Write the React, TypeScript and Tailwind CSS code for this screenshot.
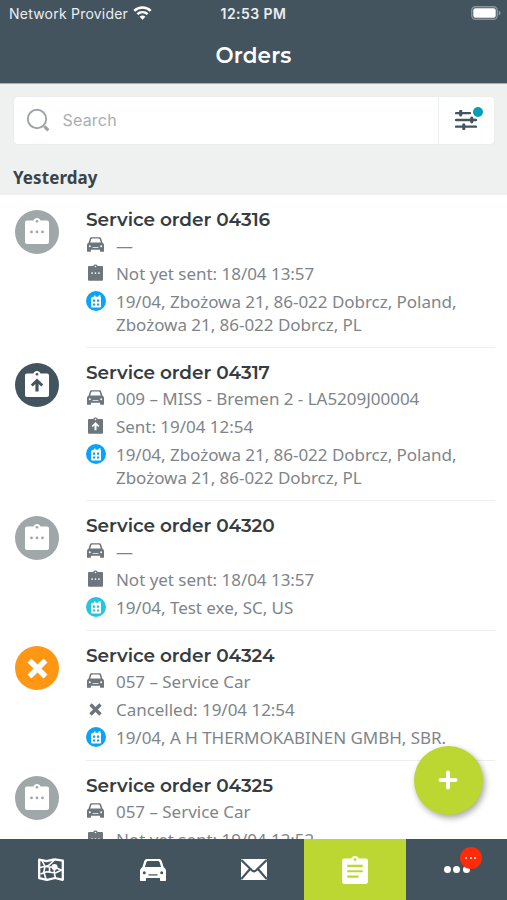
import { clsx } from 'clsx';
import type { ReactNode } from 'react';

type Status = 'pending' | 'sent' | 'cancelled';

interface Order {
    id: string;
    status: Status;
    vehicle: string;
    statusText: string;
    address: string[];
    badge?: 'blue' | 'cyan';
}

const orders: Order[] = [
    {
        id: '04316',
        status: 'pending',
        vehicle: '—',
        statusText: 'Not yet sent: 18/04 13:57',
        address: ['19/04, Zbożowa 21, 86-022 Dobrcz, Poland,', 'Zbożowa 21, 86-022 Dobrcz, PL'],
    },
    {
        id: '04317',
        status: 'sent',
        vehicle: '009 – MISS - Bremen 2 - LA5209J00004',
        statusText: 'Sent: 19/04 12:54',
        address: ['19/04, Zbożowa 21, 86-022 Dobrcz, Poland,', 'Zbożowa 21, 86-022 Dobrcz, PL'],
    },
    {
        id: '04320',
        status: 'pending',
        vehicle: '—',
        statusText: 'Not yet sent: 18/04 13:57',
        address: ['19/04, Test exe, SC, US'],
        badge: 'cyan',
    },
    {
        id: '04324',
        status: 'cancelled',
        vehicle: '057 – Service Car',
        statusText: 'Cancelled: 19/04 12:54',
        address: ['19/04, A H THERMOKABINEN GMBH, SBR.'],
    },
    {
        id: '04325',
        status: 'pending',
        vehicle: '057 – Service Car',
        statusText: 'Not yet sent: 19/04 12:52',
        address: [],
    },
];

const CarIcon = ({ className }: { className?: string }) => (
    <svg viewBox="0 0 26 22" className={className} fill="currentColor">
        <path
            fillRule="evenodd"
            d="M7.500 0h11c1.700 0 2.700.6 3.200 2.100L23.700 8.300C25.300 9.200 26 10.500 26 12.200v9c0 .5-.3.800-.8.800h-4.400c-.5 0-.8-.3-.8-.8V19H6v2.200c0 .5-.3.800-.8.800H.8c-.5 0-.8-.3-.8-.8v-9c0-1.700.7-3 2.300-3.900L4.300 2.100C4.800.6 5.800 0 7.500 0ZM8 1.900c-.8 0-1.300.3-1.500 1L4.900 8.100h16.200L19.500 2.900c-.2-.7-.7-1-1.500-1ZM4.300 12.300a1.500 1.500 0 1 0 0 3 1.500 1.500 0 0 0 0-3Zm17.400 0a1.500 1.500 0 1 0 0 3 1.500 1.500 0 0 0 0-3ZM8.500 15.300v1.200h9v-1.200Z"
        />
    </svg>
);

const ClipboardIcon = ({ kind, className }: { kind: 'dots' | 'arrow' | 'lines'; className?: string }) => {
    const marks = {
        dots: (
            <>
                <circle cx="6.500" cy="13.900" r="1.400" />
                <circle cx="12" cy="13.900" r="1.400" />
                <circle cx="17.500" cy="13.900" r="1.400" />
            </>
        ),
        arrow: <path d="M12 7.400 18.200 13.600 16.300 15.500 13.600 12.900V20.500h-3.200V12.900L7.700 15.500 5.800 13.600Z" />,
        lines: <path d="M4.800 8.200h14.400v2H4.800zM4.800 13.200h14.400v2H4.800zM4.800 18.200h10.400v2H4.800z" />,
    };

    return (
        <svg viewBox="0 0 24 26" className={className}>
            <path
                fill="currentColor"
                d="M2 2.400h6.500C8.900.9 10.300 0 12 0s3.100.9 3.500 2.400H22c1.200 0 2 .8 2 2V24c0 1.200-.8 2-2 2H2c-1.200 0-2-.8-2-2V4.400c0-1.200.8-2 2-2Z"
            />
            <g className="fill-(--mark)">
                <circle cx="12" cy="3.300" r="1.300" />
                {marks[kind]}
            </g>
        </svg>
    );
};

const CrossIcon = ({ className }: { className?: string }) => (
    <svg viewBox="0 0 22 22" className={className} stroke="currentColor" strokeWidth="5.800">
        <path d="M2.600 2.600 19.400 19.400M19.400 2.600 2.600 19.400" />
    </svg>
);

const BuildingBadge = ({ tone = 'blue' }: { tone?: 'blue' | 'cyan' }) => (
    <svg
        viewBox="0 0 20 20"
        className={clsx('h-5 w-5', tone === 'blue' ? 'text-[#0ba2fa]' : 'text-[#25c5e0]')}
        fill="currentColor"
    >
        <circle cx="10" cy="10" r="10" />
        <path
            fill="#fff"
            d="M5.200 6.500 7.800 5.700l.4-1.200h1.200v1.200h2.800L13 4.300h1.500v1.700l.5.500V15.800c0 .5-.3.800-.8.800H6c-.5 0-.8-.3-.8-.8Z"
        />
        <path d="M7 8.500h2.200v2.200H7zM11 8.500h2.200v2.200H11zM7 12.400h2.200v2.200H7zM11 12.400h2.200v2.200H11z" />
    </svg>
);

const StatusCircle = ({ status }: { status: Status }) => (
    <div
        className={clsx(
            'mt-[15px] ml-[15.400px] flex h-11 w-11 shrink-0 items-center justify-center rounded-full text-white',
            status === 'pending' && 'bg-[#9fa7a9] [--mark:#9fa7a9]',
            status === 'sent' && 'bg-[#44545f] [--mark:#44545f]',
            status === 'cancelled' && 'bg-[#ff9614]',
        )}
    >
        {status === 'cancelled' ? (
            <CrossIcon className="h-[21px] w-[21px]" />
        ) : (
            <ClipboardIcon kind={status === 'sent' ? 'arrow' : 'dots'} className="mb-0.5 h-[26px] w-6" />
        )}
    </div>
);

const Row = ({ icon, children }: { icon: ReactNode; children: ReactNode }) => (
    <div className="flex py-[2.500px] text-[17px] leading-[23px] tracking-[-0.030px] text-[#7e8589]">
        <div className="flex h-[23px] w-5 shrink-0 items-center justify-center text-[#6d767c] [--mark:#fff]">
            {icon}
        </div>
        <div className="ml-2.5 whitespace-nowrap">{children}</div>
    </div>
);

const OrderItem = ({ order }: { order: Order }) => (
    <div className="flex">
        <StatusCircle status={order.status} />
        <div className="mr-3 ml-[26.600px] min-w-0 flex-1 border-b border-[#eeefef] pt-3 pb-[9px]">
            <h2 className="h-6 font-['Montserrat','Inter',sans-serif] text-[18.500px] leading-[26px] font-semibold tracking-[-0.060px] whitespace-nowrap text-[#353c42]">
                Service order {order.id}
            </h2>
            <Row icon={<CarIcon className="mb-px h-[15px] w-[17px]" />}>{order.vehicle}</Row>
            <Row
                icon={
                    order.status === 'cancelled' ? (
                        <CrossIcon className="h-[13px] w-[13px]" />
                    ) : (
                        <ClipboardIcon
                            kind={order.status === 'sent' ? 'arrow' : 'dots'}
                            className="mb-0.5 h-[17px] w-[15px]"
                        />
                    )
                }
            >
                {order.statusText}
            </Row>
            <Row icon={<BuildingBadge tone={order.badge} />}>
                {order.address.map((line) => (
                    <p key={line}>{line}</p>
                ))}
            </Row>
        </div>
    </div>
);

const StatusBar = () => (
    <div className="grid h-7 grid-cols-3 items-center font-['Inter',sans-serif] text-[14px] text-[#e9eef1]">
        <div className="flex items-center gap-[5px] pb-px pl-[9px] whitespace-nowrap">
            <span className="tracking-[0.220px]">Network Provider</span>
            <svg viewBox="0 0 20 15" className="mb-px h-[14px] w-[19px]" fill="none" stroke="#fff" strokeWidth="2.600">
                <path d="M1.200 5.300a12.500 12.500 0 0 1 17.600 0M4.500 8.800a7.800 7.800 0 0 1 11 0" />
                <path d="M10 14.800 6.900 11.600a4.400 4.400 0 0 1 6.200 0Z" fill="#fff" stroke="none" />
            </svg>
        </div>
        <p className="pb-px text-center font-semibold tracking-[0.450px]">12:53 PM</p>
        <div className="flex justify-end pr-[6px]">
            <svg viewBox="0 0 30 14" className="mb-0.5 h-[14px] w-[30px]">
                <rect x=".8" y=".8" width="25.400" height="12.400" rx="3.500" fill="none" stroke="#89949b" strokeWidth="1.400" />
                <rect x="2.300" y="2.300" width="22.400" height="9.400" rx="2" fill="#fff" />
                <path d="M27.600 4.500c2.600 1 2.600 4 0 5Z" fill="#89949b" />
            </svg>
        </div>
    </div>
);

const SearchBar = () => (
    <div className="mr-3 ml-[13px] flex h-[49px] rounded-[5px] border border-[#ebeeee] bg-white">
        <div className="flex flex-1 items-center pb-px">
            <svg viewBox="0 0 24 24" className="ml-3 h-6 w-6" fill="none" stroke="#9ea4a7">
                <circle cx="11" cy="11" r="9.200" strokeWidth="1.900" />
                <path d="m18.400 18.400 3.900 3.900" strokeWidth="3.200" />
            </svg>
            <span className="ml-[12.500px] font-['Inter',sans-serif] text-[16px] tracking-[0.200px] text-[#a9aeb1]">
                Search
            </span>
        </div>
        <div className="flex w-14 items-center justify-center border-l border-[#edf0f0] pr-px pb-px">
            <div className="relative">
                <svg viewBox="0 0 22 20" className="h-5 w-[22px]" fill="#44545f" stroke="#44545f">
                    <path d="M1 3.200h14M1 10h20M1 16.700h20" strokeWidth="2.300" strokeLinecap="round" />
                    <path d="M5.700 1.400v3.600M16.800 8.200v3.600M8.800 14.900v3.600" strokeWidth="3.200" strokeLinecap="round" />
                </svg>
                <span className="absolute -top-[3px] -right-[6px] h-[10px] w-[10px] rounded-full bg-[#069fb8]" />
            </div>
        </div>
    </div>
);

const MapIcon = () => (
    <svg viewBox="0 0 26 23" className="h-[23px] w-[26px]" fill="none" stroke="currentColor">
        <path d="M1.200 1.600 8.500 3.200 16.500 1.300 24.800 2.700V21.800L17 20 9 21.800 1.200 20.200Z" strokeWidth="2.300" strokeLinejoin="round" />
        <path
            d="M4 2.500 7 8.500 5.800 14 8 21M2 9.500l8.500-2 6-5.500M2.500 16l6-2.300 9 1.300 6.500-3.200M16.800 8.500l-.6 6.500 1.300 5M16.800 9l7 3.500M7 8.500l5 .5 4 0M11.500 9v5"
            strokeWidth="1.600"
        />
        <circle cx="16.500" cy="9" r="3" fill="currentColor" stroke="none" />
    </svg>
);

const MailIcon = () => (
    <svg viewBox="0 0 26 21" className="h-[21px] w-[26px]">
        <rect width="26" height="21" rx="1" fill="currentColor" />
        <path d="M.3 1 10.800 11.300c1.300 1.200 3.100 1.200 4.400 0L25.700 1M.3 20 9 10M25.700 20 17 10" fill="none" stroke="#44545f" strokeWidth="2.200" />
    </svg>
);

const TabBar = () => (
    <nav className="grid h-[61px] shrink-0 grid-cols-5 bg-[#44545f] text-white *:flex *:items-center *:justify-center *:pl-px">
        <button>
            <MapIcon />
        </button>
        <button>
            <CarIcon className="h-[22px] w-[26px]" />
        </button>
        <button>
            <MailIcon />
        </button>
        <button className="bg-[#bcd731] [--mark:#bcd731]">
            <ClipboardIcon kind="lines" className="h-[28px] w-[26px]" />
        </button>
        <button>
            <div className="relative flex gap-[2.500px]">
                <span className="h-[7px] w-[7px] rounded-full bg-white" />
                <span className="h-[7px] w-[7px] rounded-full bg-white" />
                <span className="h-[7px] w-[7px] rounded-full bg-white" />
                <span className="absolute -top-[19.500px] left-[16px] flex h-[22px] w-[22px] items-center justify-center gap-[2.500px] rounded-full bg-[#fd2b09]">
                    <i className="h-[2px] w-[2px] rounded-full bg-white" />
                    <i className="h-[2px] w-[2px] rounded-full bg-white" />
                    <i className="h-[2px] w-[2px] rounded-full bg-white" />
                </span>
            </div>
        </button>
    </nav>
);

export default function App() {
    return (
        <div className="relative flex h-[900px] w-[507px] flex-col overflow-hidden bg-white font-['Noto_Sans',sans-serif]">
            <header className="h-[84px] shrink-0 border-b border-[#a5aeb3] bg-[#44545f]">
                <StatusBar />
                <h1 className="mt-3 text-center font-['Montserrat','Inter',sans-serif] text-[21.500px] leading-[30px] font-semibold tracking-[0.150px] text-white">
                    Orders
                </h1>
            </header>
            <section className="h-[111px] shrink-0 bg-[#eff1f1] pt-3">
                <SearchBar />
                <p className="mt-[21px] ml-[13px] text-[17px] leading-6 font-bold tracking-[0.080px] text-[#3a4349]">
                    Yesterday
                </p>
            </section>
            <main className="min-h-0 flex-1 overflow-hidden">
                {orders.map((order) => (
                    <OrderItem key={order.id} order={order} />
                ))}
            </main>
            <TabBar />
            <button className="absolute top-[746px] left-[414px] flex h-[69px] w-[69px] items-center justify-center rounded-full bg-[#bcd731] pr-px pb-px text-white shadow-[2px_3px_6px_rgba(0,0,0,0.350)]">
                <svg viewBox="0 0 20 20" className="h-5 w-5" stroke="currentColor" strokeWidth="4" strokeLinecap="round">
                    <path d="M10 2.500v15M2.500 10h15" />
                </svg>
            </button>
        </div>
    );
}
